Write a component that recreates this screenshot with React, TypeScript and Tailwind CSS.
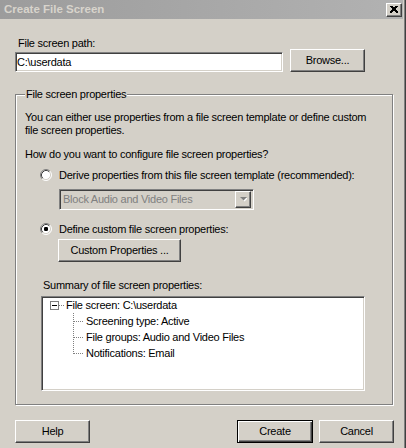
import React from 'react';

const sunken = 'border border-t-[#808080] border-l-[#808080] border-b-white border-r-white shadow-[inset_1px_1px_0_#404040,inset_-1px_-1px_0_#d4d0c8]';
const raised = 'border border-t-white border-l-white border-b-[#404040] border-r-[#404040] shadow-[inset_-1px_-1px_0_#808080] bg-[#d4d0c8]';

const Radio = ({ checked }: { checked?: boolean }) => (
    <svg width="12" height="12" viewBox="0 0 12 12" className="shrink-0">
        <circle cx="6" cy="6" r="5" fill="#fff" />
        <path d="M2.11 9.89 A5.5 5.5 0 0 1 9.89 2.11" stroke="#808080" fill="none" />
        <path d="M9.89 2.11 A5.5 5.5 0 0 1 2.11 9.89" stroke="#fff" fill="none" />
        <path d="M2.82 9.18 A4.5 4.5 0 0 1 9.18 2.82" stroke="#404040" fill="none" />
        <path d="M9.18 2.82 A4.5 4.5 0 0 1 2.82 9.18" stroke="#d4d0c8" fill="none" />
        {checked && <rect x="4" y="4" width="4" height="4" rx="1.2" fill="#000" />}
    </svg>
);

const Button = ({ label, className = '' }: { label: string; className?: string }) => (
    <div className={`${raised} flex items-center justify-center h-[23px] ${className}`}>
        {label}
    </div>
);

const dotted = { stroke: '#808080', strokeDasharray: '1 1', shapeRendering: 'crispEdges' as const };

const TreeChild = ({ text, last }: { text: string; last?: boolean }) => (
    <div className="flex items-center h-[16px]">
        <svg width="43" height="16" className="shrink-0">
            <line x1="30.5" y1="0" x2="30.5" y2={last ? 9 : 16} style={dotted} />
            <line x1="31" y1="8.5" x2="41" y2="8.5" style={dotted} />
        </svg>
        <span className="whitespace-nowrap">{text}</span>
    </div>
);

export default function App() {
    return (
        <div className="w-[406px] h-[448px] bg-[#d4d0c8] text-black text-[11px] leading-[13px] tracking-[-0.25px] font-['Liberation_Sans',Arial,sans-serif] flex flex-col shadow-[inset_-1px_0_0_#404040,inset_-2px_0_0_#808080] overflow-hidden">
            {/* Title bar */}
            <div className="w-[403px] h-[19px] shrink-0 flex items-center bg-gradient-to-r from-[#9c9c9c] to-[#b2b2b2]">
                <span className="pl-[4px] font-bold text-[11.5px] tracking-normal text-[#d8d4cc] whitespace-nowrap">Create File Screen</span>
                <div className={`${raised} ml-auto mr-[1px] w-[16px] h-[14px] flex items-center justify-center`}>
                    <svg width="8" height="7" viewBox="0 0 8 7">
                        <path d="M0.5 0 L7.5 7 M1.5 0 L8 6.5 M7.5 0 L0.5 7 M6.5 0 L0 6.5" stroke="#000" strokeWidth="1" shapeRendering="crispEdges" />
                    </svg>
                </div>
            </div>

            <div className="ml-[18px] mt-[18px] leading-[12px] whitespace-nowrap">File screen path:</div>
            <div className="flex items-start">
                <div className={`${sunken} ml-[15px] mt-[3px] w-[268px] h-[20px] bg-white flex items-center pl-[1px]`}>
                    C:\userdata
                </div>
                <Button label="Browse..." className="ml-[7px] w-[75px]" />
            </div>

            {/* File screen properties group */}
            <div className="relative ml-[15px] mt-[22px] w-[378px] h-[311px] border border-[#808080] shadow-[1px_1px_0_#fff,inset_1px_1px_0_#fff] flex flex-col pl-[9px]">
                <span className="absolute -top-[7px] left-[9px] px-[1px] bg-[#d4d0c8] leading-[12px] whitespace-nowrap">File screen properties</span>
                <div className="mt-[16px] whitespace-nowrap">
                    You can either use properties from a file screen template or define custom
                    <br />
                    file screen properties.
                </div>
                <div className="mt-[11px] whitespace-nowrap">How do you want to configure file screen properties?</div>
                <div className="mt-[7px] ml-[15px] h-[14px] flex items-center gap-[7px] whitespace-nowrap">
                    <Radio />
                    Derive properties from this file screen template (recommended):
                </div>
                <div className={`${sunken} mt-[7px] ml-[34px] w-[195px] h-[21px] flex items-center pl-[3px] pr-[2px] text-[#808080]`}>
                    <span className="whitespace-nowrap">Block Audio and Video Files</span>
                    <div className={`${raised} ml-auto w-[16px] h-[17px] flex items-center justify-center`}>
                        <svg width="7" height="5" viewBox="0 0 7 5">
                            <path d="M1 1 H8 L4.5 4.5 Z" fill="#fff" />
                            <path d="M0 0 H7 L3.5 3.5 Z" fill="#808080" />
                        </svg>
                    </div>
                </div>
                <div className="mt-[12px] ml-[15px] h-[14px] flex items-center gap-[7px] whitespace-nowrap">
                    <Radio checked />
                    Define custom file screen properties:
                </div>
                <Button label="Custom Properties ..." className="mt-[3px] ml-[33px] w-[123px]" />
                <div className="mt-[17px] ml-[18px] whitespace-nowrap">Summary of file screen properties:</div>
                <div className={`${sunken} mt-[4px] ml-[16px] w-[324px] h-[95px] bg-white pl-[1px] pt-[1px]`}>
                    <div className="-mt-[1px] flex flex-col">
                        <div className="flex items-center h-[16px]">
                            <svg width="23" height="16" className="shrink-0">
                                <rect x="7.5" y="4.5" width="8" height="8" fill="#fff" stroke="#808080" shapeRendering="crispEdges" />
                                <line x1="9" y1="8.5" x2="14" y2="8.5" stroke="#000" shapeRendering="crispEdges" />
                                <line x1="16" y1="8.5" x2="22" y2="8.5" style={dotted} />
                            </svg>
                            <span className="whitespace-nowrap">File screen: C:\userdata</span>
                        </div>
                        <TreeChild text="Screening type: Active" />
                        <TreeChild text="File groups: Audio and Video Files" />
                        <TreeChild text="Notifications: Email" last />
                    </div>
                </div>
            </div>

            <div className="mt-[15px] flex items-start">
                <Button label="Help" className="ml-[15px] w-[75px]" />
                <div className="ml-[147px] w-[76px] h-[23px] border border-black shadow-[inset_1px_1px_0_#fff,inset_-1px_-1px_0_#404040,inset_-2px_-2px_0_#808080] flex items-center justify-center">
                    Create
                </div>
                <Button label="Cancel" className="ml-[6px] w-[75px]" />
            </div>
        </div>
    );
}
